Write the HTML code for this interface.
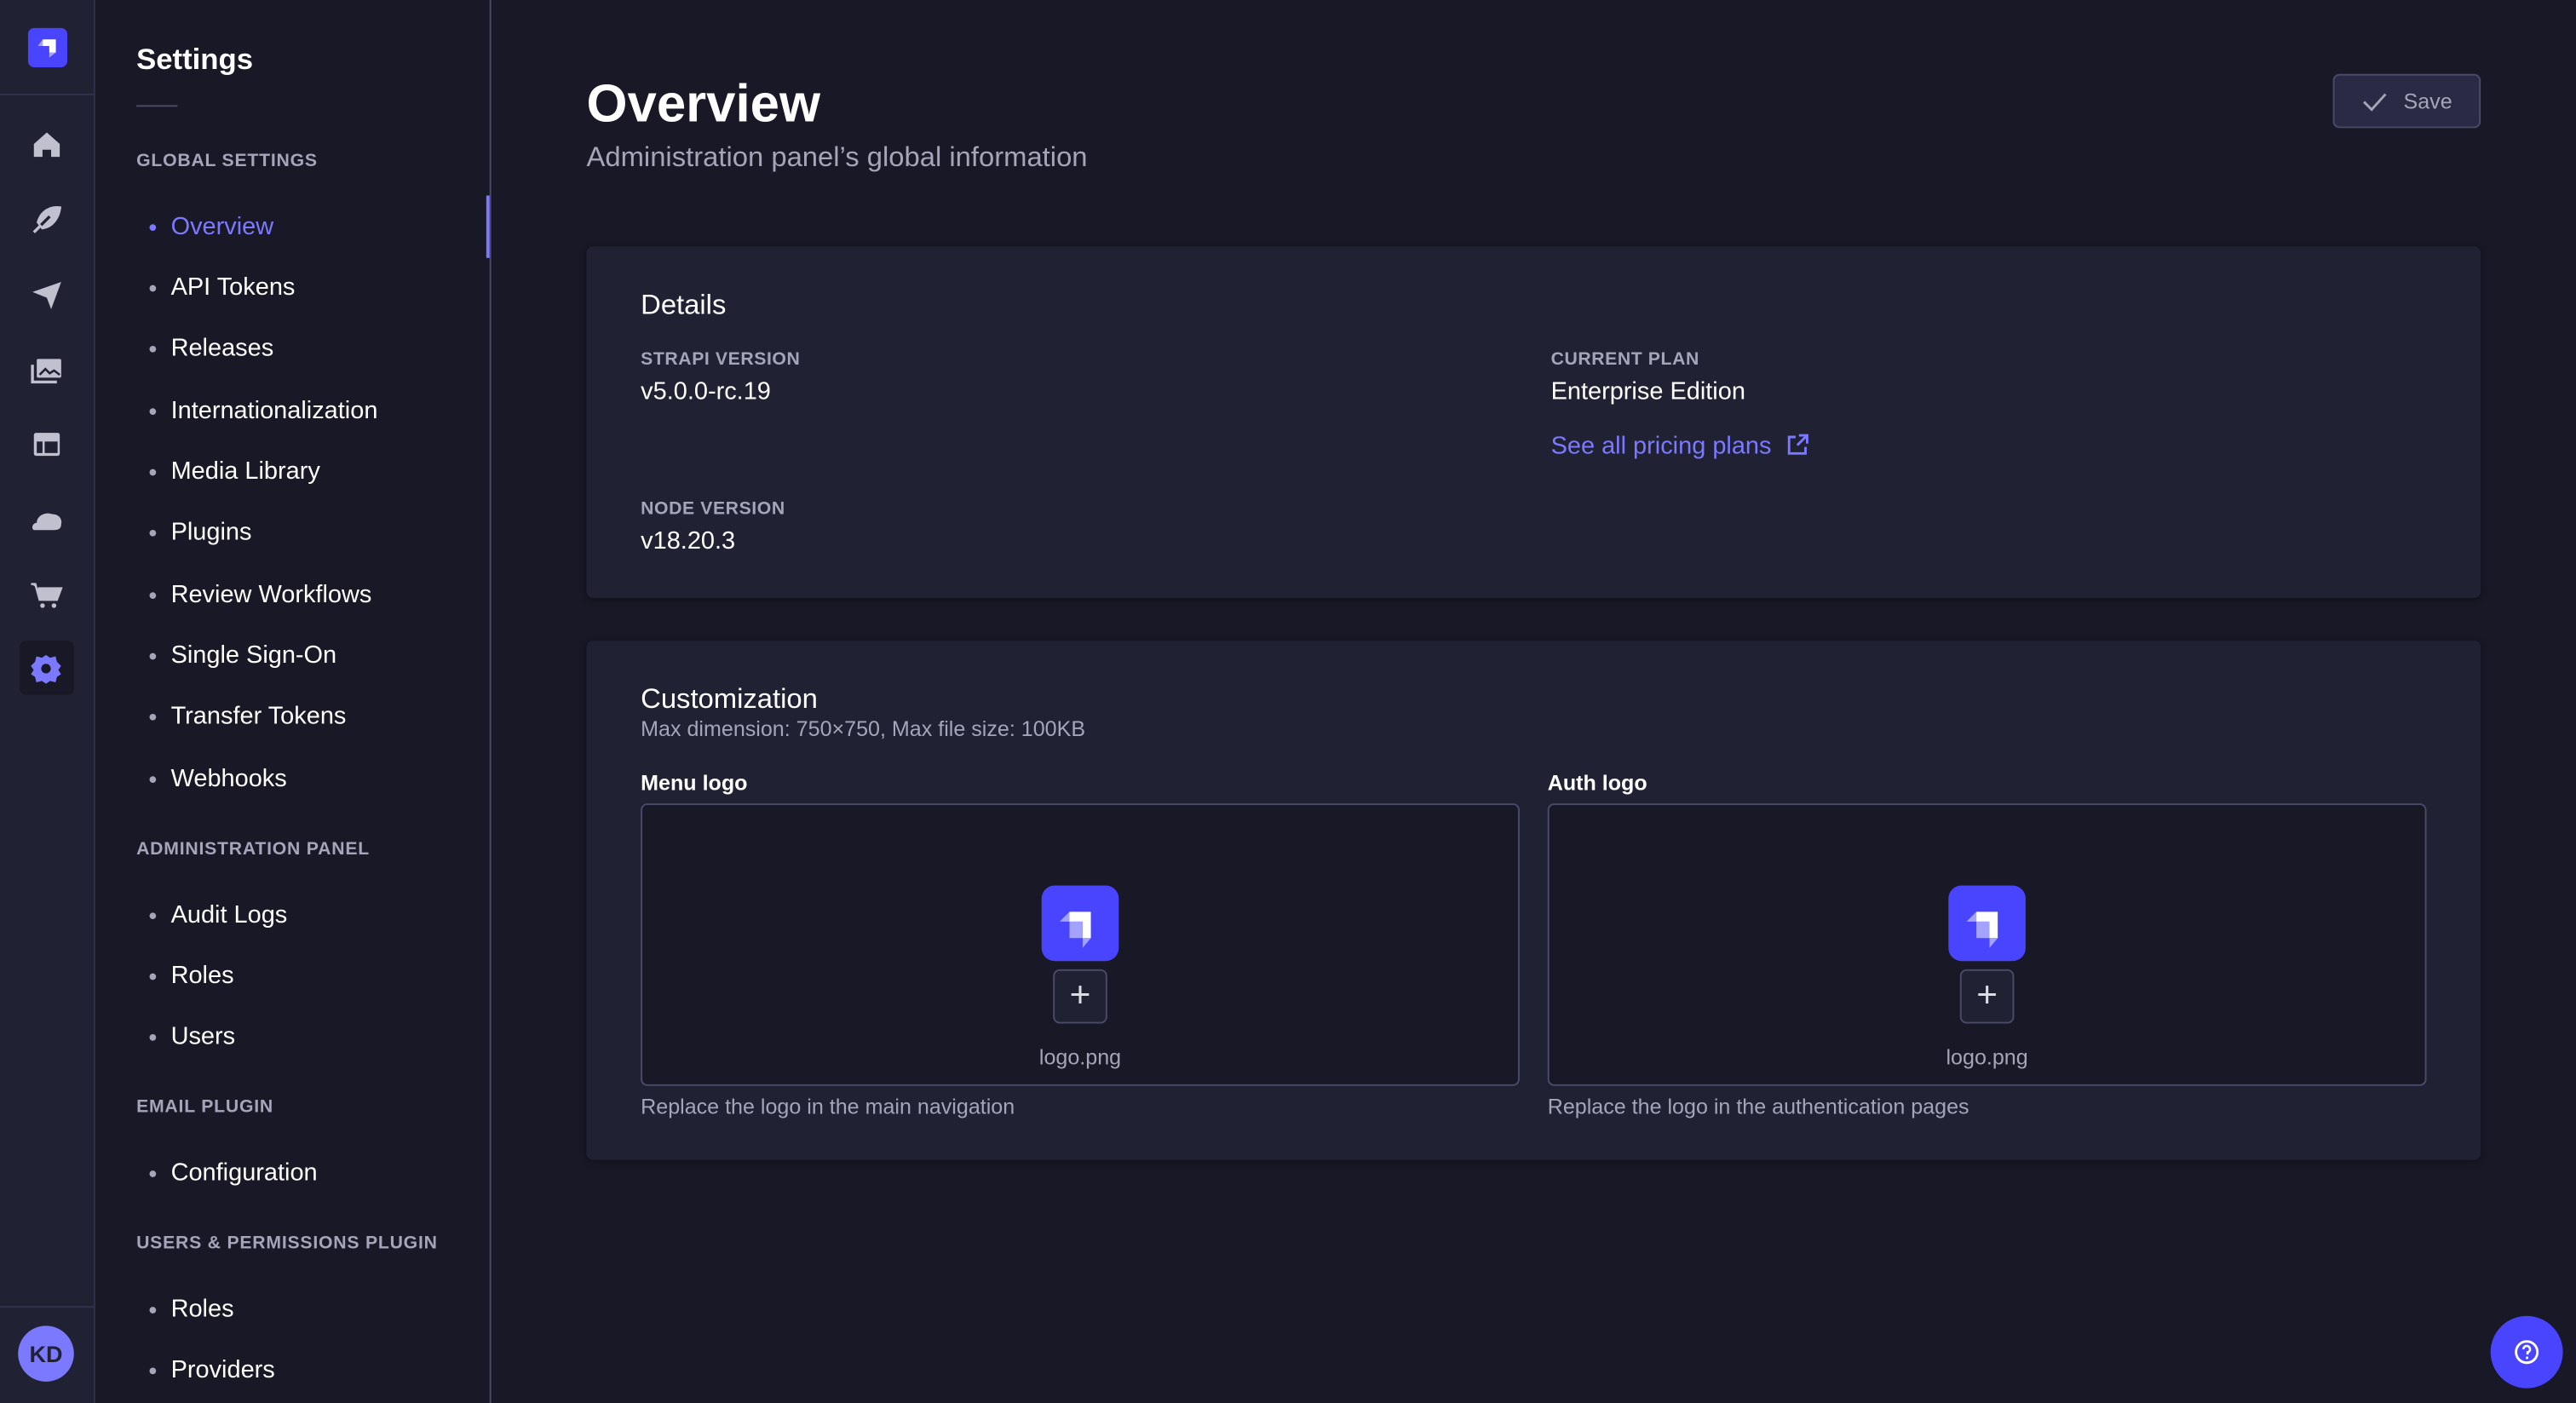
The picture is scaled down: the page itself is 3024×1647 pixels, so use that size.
<!DOCTYPE html>
<html><head><meta charset="utf-8"><style>
*{box-sizing:border-box;margin:0;padding:0}
html,body{width:3024px;height:1646px;overflow:hidden;background:#181826;font-family:"Liberation Sans",sans-serif}
#s{position:absolute;left:0;top:0;width:1568px;height:854px;transform:scale(1.92857);transform-origin:0 0;background:#181826;color:#fff}
.a{position:absolute;white-space:nowrap}
.nav{left:0;top:0;width:58px;height:854px;background:#212134;border-right:1px solid #32324d}
.sub{left:58px;top:0;width:241px;height:854px;background:#181826;border-right:1px solid #4a4a6a}
.lab{font-size:11px;color:#a5a5ba;font-weight:bold;letter-spacing:.4px;transform:translateY(-50%)}
.it{font-size:15px;color:#fff;transform:translateY(-50%)}
.it:before{content:"";position:absolute;left:-13px;top:50%;width:4px;height:4px;margin-top:-2px;border-radius:50%;background:#a5a5ba}
.it.p:before{background:#7b79ff}
.ico{position:absolute;left:18px;width:21px;height:21px}
.card{background:#212134;border-radius:4px;box-shadow:0 1px 4px rgba(0,0,0,.3)}
.sm{font-size:11px;color:#a5a5ba;font-weight:bold;letter-spacing:.3px}
.v{font-size:15px;color:#fff}
.box{background:#181826;border:1px solid #4a4a6a;border-radius:4px}
.lg{width:47px;height:46px;background:#4945ff;border-radius:8px}
.pl{width:33px;height:33px;border:1px solid #4a4a6a;border-radius:4px;background:#212134;color:#dcdce4;font-size:22px;text-align:center;line-height:30px}
</style></head><body><div id="s">
<div class="a nav"></div>
<div class="a" style="left:0;top:57px;width:57px;height:1px;background:#32324d"></div>
<div class="a" style="left:0;top:795px;width:57px;height:1px;background:#32324d"></div>
<svg class="a" style="left:17px;top:17px" width="24" height="24" viewBox="0 0 24 24"><rect width="24" height="24" rx="4" fill="#4945ff"/><path d="M9 7h8v8h-4v-4H9z" fill="#fff"/><path d="M6 11l3-4v4z M13 15h4l-4 3z" fill="#a4a2ff"/></svg>
<svg class="ico" style="top:78px" viewBox="0 0 24 24"><path d="M3 11L12 3l9 8v9h-6v-5H9v5H3z" fill="#c0c0cf"/></svg>
<svg class="ico" style="top:123px" viewBox="0 0 24 24"><path d="M3 21l6-6M6 14c2-7 8-11 15-10-1 7-5 13-12 14z" fill="#c0c0cf" stroke="#c0c0cf" stroke-width="2"/><path d="M8 16l6-6" stroke="#212134" stroke-width="2"/></svg>
<svg class="ico" style="top:169px" viewBox="0 0 24 24"><path d="M2 10L22 3 15 22l-3-8z" fill="#c0c0cf"/></svg>
<svg class="ico" style="top:215px" viewBox="0 0 24 24"><rect x="5" y="4" width="17" height="13" rx="1" fill="#c0c0cf"/><path d="M2 8v12h17" stroke="#c0c0cf" stroke-width="2" fill="none"/><path d="M7 15l4-4 3 3 3-2 4 3" stroke="#212134" stroke-width="1.5" fill="none"/></svg>
<svg class="ico" style="top:260px" viewBox="0 0 24 24"><rect x="3" y="4" width="18" height="16" rx="1.5" fill="#c0c0cf"/><rect x="5" y="10" width="4" height="8" fill="#212134"/><rect x="10.5" y="10" width="9" height="8" fill="#212134"/></svg>
<svg class="ico" style="top:306px" viewBox="0 0 24 24"><path d="M3 19c-2-1-1-5 2-5 0-5 6-8 11-6 4 0 7 3 6 7 0 3-2 4-5 4z" fill="#c0c0cf"/></svg>
<svg class="ico" style="top:352px" viewBox="0 0 24 24"><path d="M1 4h3l3 11h12l3-8H6" fill="#c0c0cf" stroke="#c0c0cf" stroke-width="1.5"/><circle cx="9" cy="19" r="1.6" fill="#c0c0cf"/><circle cx="17" cy="19" r="1.6" fill="#c0c0cf"/></svg>
<div class="a" style="left:12px;top:390px;width:33px;height:33px;background:#181826;border-radius:4px"></div>
<svg class="ico" style="top:397px;left:18px;width:20px;height:20px" viewBox="0 0 24 24"><path d="M12 2l3 2 4-1 1 4 3 3-2 3 2 3-3 2-1 4-4-1-3 2-3-2-4 1-1-4-3-2 2-3-2-3 3-3 1-4 4 1z" fill="#7b79ff"/><circle cx="12" cy="12" r="3.5" fill="#181826"/></svg>
<div class="a" style="left:11px;top:807px;width:34px;height:34px;border-radius:50%;background:#7b79ff;color:#212134;font-size:14px;font-weight:bold;text-align:center;line-height:34px">KD</div>

<div class="a sub"></div>
<div class="a" style="left:296px;top:119px;width:2px;height:38px;background:#7b79ff"></div>
<div class="a" style="left:83px;top:26px;font-size:18px;font-weight:bold">Settings</div>
<div class="a" style="left:83px;top:64px;width:25px;height:1px;background:#4a4a6a"></div>
<div class="a lab" style="left:83px;top:98px">GLOBAL SETTINGS</div>
<div class="a it p" style="left:104px;top:138px;color:#7b79ff">Overview</div>
<div class="a it" style="left:104px;top:175px">API Tokens</div>
<div class="a it" style="left:104px;top:212px">Releases</div>
<div class="a it" style="left:104px;top:250px">Internationalization</div>
<div class="a it" style="left:104px;top:287px">Media Library</div>
<div class="a it" style="left:104px;top:324px">Plugins</div>
<div class="a it" style="left:104px;top:362px">Review Workflows</div>
<div class="a it" style="left:104px;top:399px">Single Sign-On</div>
<div class="a it" style="left:104px;top:436px">Transfer Tokens</div>
<div class="a it" style="left:104px;top:474px">Webhooks</div>
<div class="a lab" style="left:83px;top:517px">ADMINISTRATION PANEL</div>
<div class="a it" style="left:104px;top:557px">Audit Logs</div>
<div class="a it" style="left:104px;top:594px">Roles</div>
<div class="a it" style="left:104px;top:631px">Users</div>
<div class="a lab" style="left:83px;top:674px">EMAIL PLUGIN</div>
<div class="a it" style="left:104px;top:714px">Configuration</div>
<div class="a lab" style="left:83px;top:757px">USERS &amp; PERMISSIONS PLUGIN</div>
<div class="a it" style="left:104px;top:797px">Roles</div>
<div class="a it" style="left:104px;top:834px">Providers</div>

<div class="a" style="left:357px;top:45px;font-size:32px;font-weight:bold">Overview</div>
<div class="a" style="left:357px;top:86px;font-size:17px;color:#a5a5ba">Administration panel’s global information</div>
<div class="a" style="left:1420px;top:45px;width:90px;height:33px;background:#2a2a44;border:1px solid #4a4a6a;border-radius:4px;color:#a5a5ba;font-size:13px;line-height:31px;padding-left:42px">Save</div>
<svg class="a" style="left:1438px;top:55px" width="15" height="14" viewBox="0 0 16 14"><path d="M1 7l5 5L15 2" stroke="#a5a5ba" stroke-width="1.6" fill="none"/></svg>

<div class="a card" style="left:357px;top:150px;width:1153px;height:214px"></div>
<div class="a" style="left:390px;top:176px;font-size:17px">Details</div>
<div class="a sm" style="left:390px;top:213px">STRAPI VERSION</div>
<div class="a v" style="left:390px;top:230px">v5.0.0-rc.19</div>
<div class="a sm" style="left:944px;top:213px">CURRENT PLAN</div>
<div class="a v" style="left:944px;top:230px">Enterprise Edition</div>
<div class="a v" style="left:944px;top:263px;color:#7b79ff">See all pricing plans</div>
<svg class="a" style="left:1087px;top:264px" width="14" height="14" viewBox="0 0 14 14"><path d="M6 2H2v10h10V8M8 1h5v5M13 1L7 7" stroke="#7b79ff" stroke-width="1.5" fill="none"/></svg>
<div class="a sm" style="left:390px;top:304px">NODE VERSION</div>
<div class="a v" style="left:390px;top:321px">v18.20.3</div>

<div class="a card" style="left:357px;top:390px;width:1153px;height:316px"></div>
<div class="a" style="left:390px;top:416px;font-size:17px">Customization</div>
<div class="a" style="left:390px;top:436px;font-size:13px;color:#a5a5ba">Max dimension: 750×750, Max file size: 100KB</div>
<div class="a" style="left:390px;top:469px;font-size:13px;font-weight:bold">Menu logo</div>
<div class="a" style="left:942px;top:469px;font-size:13px;font-weight:bold">Auth logo</div>
<div class="a box" style="left:390px;top:489px;width:535px;height:172px"></div>
<div class="a box" style="left:942px;top:489px;width:535px;height:172px"></div>
<svg class="a lg" style="left:634px;top:539px" viewBox="0 0 47 46"><path d="M17 16h13v16h-5V22h-8z" fill="#fff"/><path d="M11 22l6-6v6zM25 32h5l-5 6z" fill="#a4a2ff"/><rect x="17" y="22" width="8" height="10" fill="#a4a2ff"/></svg>
<svg class="a lg" style="left:1186px;top:539px" viewBox="0 0 47 46"><path d="M17 16h13v16h-5V22h-8z" fill="#fff"/><path d="M11 22l6-6v6zM25 32h5l-5 6z" fill="#a4a2ff"/><rect x="17" y="22" width="8" height="10" fill="#a4a2ff"/></svg>
<div class="a pl" style="left:641px;top:590px">+</div>
<div class="a pl" style="left:1193px;top:590px">+</div>
<div class="a" style="left:590px;width:135px;text-align:center;top:636px;font-size:13px;color:#a5a5ba">logo.png</div>
<div class="a" style="left:1142px;width:135px;text-align:center;top:636px;font-size:13px;color:#a5a5ba">logo.png</div>
<div class="a" style="left:390px;top:666px;font-size:13px;color:#a5a5ba">Replace the logo in the main navigation</div>
<div class="a" style="left:942px;top:666px;font-size:13px;color:#a5a5ba">Replace the logo in the authentication pages</div>

<div class="a" style="left:1516px;top:801px;width:44px;height:44px;border-radius:50%;background:#4945ff"></div>
<svg class="a" style="left:1530px;top:815px" width="16" height="16" viewBox="0 0 16 16"><circle cx="8" cy="8" r="6.5" stroke="#fff" stroke-width="1.5" fill="none"/><path d="M6 6.3a2 2 0 1 1 2.5 1.9V9.5" stroke="#fff" stroke-width="1.4" fill="none"/><circle cx="8.2" cy="11.5" r=".8" fill="#fff"/></svg>
</div></body></html>
